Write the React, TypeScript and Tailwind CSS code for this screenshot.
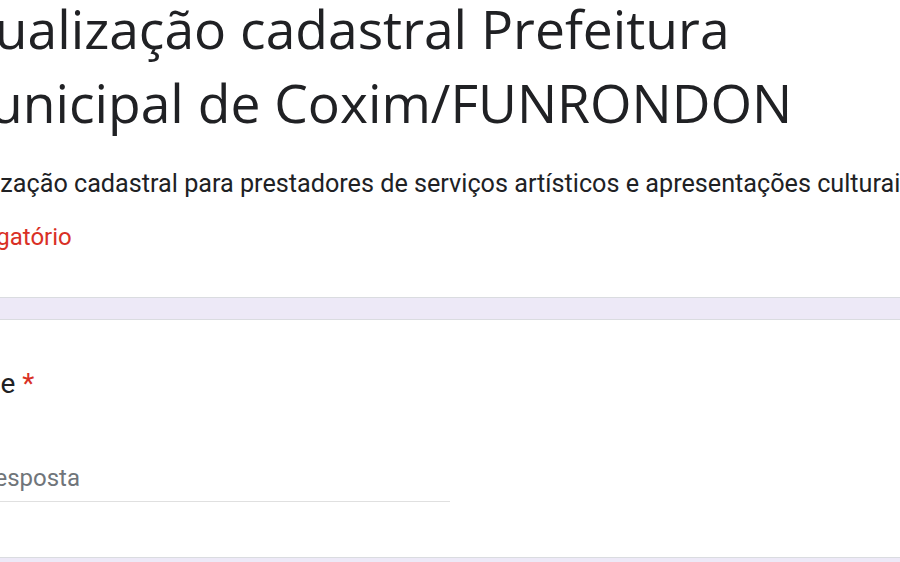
import React from "react";

export default function App() {
  return (
    <div className="flex h-[562px] w-[900px] flex-col overflow-hidden bg-[#ede9f7] font-['Roboto',_'Noto_Sans',_sans-serif]">
      {/* header card */}
      <div className="flex h-[298px] shrink-0 flex-col border-b border-[#dadce0] bg-white">
        <div className="-ml-[64px] -mt-[8px]">
          <h1 className="ml-[6px] whitespace-nowrap font-['Open_Sans',_'Noto_Sans',_sans-serif] text-[53.4px] font-normal leading-[74px] text-[#202124]">
            <div>Atualização cadastral Prefeitura</div>
            <div>Municipal de Coxim/FUNRONDON</div>
          </h1>
          <p className="mt-[26px] whitespace-nowrap text-[25.2px] leading-[36px] text-[#202124]">
            Atualização cadastral para prestadores de serviços artísticos e apresentações culturais
          </p>
          <p className="mt-[17px] text-[24px] leading-[36px] text-[#d93025]">* Obrigatório</p>
        </div>
      </div>

      {/* question card */}
      <div className="mt-[21px] h-[239px] shrink-0 border-y border-[#dadce0] bg-white">
        <div className="-ml-[60px] pt-[44px]">
          <div className="text-[28px] leading-[40px] text-[#202124]">
            Nome<span className="pl-[7px] text-[#d93025]">*</span>
          </div>
          <div className="mt-[56px] w-[510px] border-b border-[#e0e0e0] pb-[5px] text-[24px] leading-[36px] text-[#70757a]">
            Sua resposta
          </div>
        </div>
      </div>
    </div>
  );
}
